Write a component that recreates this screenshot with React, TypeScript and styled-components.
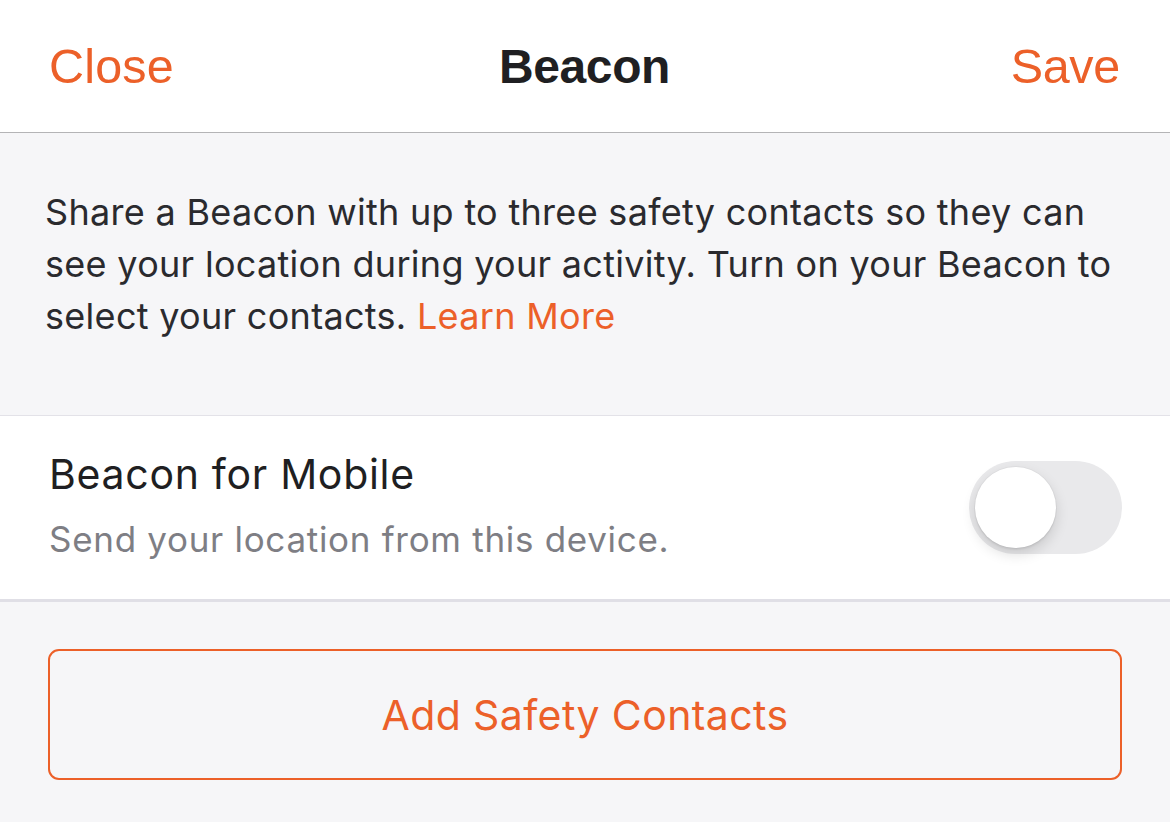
import React from "react";
import styled, { createGlobalStyle } from "styled-components";

const Global = createGlobalStyle`
  html, body { margin: 0; padding: 0; background: #f6f6f8; }
  body { font-family: "Inter", "Liberation Sans", sans-serif; -webkit-font-smoothing: antialiased; }
`;

const ORANGE = "#ec6029";

const Page = styled.div`
  width: 1170px;
  height: 822px;
  background: #f6f6f8;
  overflow: hidden;
  display: flex;
  flex-direction: column;
`;

const NavBar = styled.header`
  height: 133px;
  flex: none;
  box-sizing: border-box;
  background: #ffffff;
  border-bottom: 1px solid #b4b4b6;
  display: grid;
  grid-template-columns: 1fr auto 1fr;
  align-items: center;
  padding: 0 50px 0 49px;
`;

const NavButton = styled.button<{ $align: "left" | "right" }>`
  font-family: "Liberation Sans", Arial, sans-serif;
  font-size: 48.5px;
  color: ${ORANGE};
  background: none;
  border: none;
  padding: 0;
  justify-self: ${(p) => (p.$align === "left" ? "start" : "end")};
  letter-spacing: ${(p) => (p.$align === "left" ? "0.2px" : "-0.3px")};
  cursor: pointer;
`;

const Title = styled.h1`
  margin: 0;
  font-family: "Liberation Sans", Arial, sans-serif;
  font-weight: 700;
  font-size: 48px;
  color: #1f1f22;
  letter-spacing: -0.4px;
`;

const Description = styled.p`
  margin: 0;
  height: 283px;
  flex: none;
  box-sizing: border-box;
  padding: 53px 50px 0 45px;
  font-size: 36px;
  letter-spacing: 0.3px;
  line-height: 52px;
  color: #2a2a2e;
  border-bottom: 1px solid #e3e2e8;
`;

const Link = styled.a`
  color: ${ORANGE};
  text-decoration: none;
`;

const SettingRow = styled.div`
  height: 186px;
  flex: none;
  box-sizing: border-box;
  background: #ffffff;
  border-bottom: 3px solid #e0dfe6;
  display: flex;
  align-items: center;
  justify-content: space-between;
  padding: 0 48px 0 49px;
`;

const RowText = styled.div`
  display: flex;
  flex-direction: column;
  gap: 18px;
  margin-bottom: 5px;
`;

const RowTitle = styled.div`
  font-size: 41px;
  letter-spacing: 0.7px;
  color: #1f1f22;
  line-height: 50px;
`;

const RowSubtitle = styled.div`
  font-size: 35px;
  letter-spacing: 0.7px;
  color: #7e7e84;
  line-height: 44px;
`;

const Toggle = styled.div`
  width: 153px;
  height: 93px;
  border-radius: 47px;
  background: #e9e9eb;
  position: relative;
  flex: none;
`;

const Knob = styled.div`
  position: absolute;
  left: 6px;
  top: 6px;
  width: 81px;
  height: 81px;
  border-radius: 50%;
  background: #ffffff;
  box-shadow: 0 6px 14px rgba(0, 0, 0, 0.14), 0 2px 2px rgba(0, 0, 0, 0.06), 0 0 0 1px rgba(0, 0, 0, 0.03);
`;

const Footer = styled.div`
  padding: 47px 48px 0 48px;
`;

const OutlineButton = styled.button`
  width: 100%;
  height: 131px;
  box-sizing: border-box;
  border: 2px solid ${ORANGE};
  border-radius: 11px;
  background: transparent;
  color: ${ORANGE};
  font-family: "Inter", "Liberation Sans", sans-serif;
  font-size: 41px;
  letter-spacing: 0.4px;
  cursor: pointer;
`;

export default function App() {
  return (
    <Page>
      <Global />
      <NavBar>
        <NavButton $align="left">Close</NavButton>
        <Title>Beacon</Title>
        <NavButton $align="right">Save</NavButton>
      </NavBar>
      <Description>
        Share a Beacon with up to three safety contacts so they can see your location during your activity. Turn on your Beacon to select your contacts.{" "}
        <Link href="#">Learn More</Link>
      </Description>
      <SettingRow>
        <RowText>
          <RowTitle>Beacon for Mobile</RowTitle>
          <RowSubtitle>Send your location from this device.</RowSubtitle>
        </RowText>
        <Toggle>
          <Knob />
        </Toggle>
      </SettingRow>
      <Footer>
        <OutlineButton>Add Safety Contacts</OutlineButton>
      </Footer>
    </Page>
  );
}
